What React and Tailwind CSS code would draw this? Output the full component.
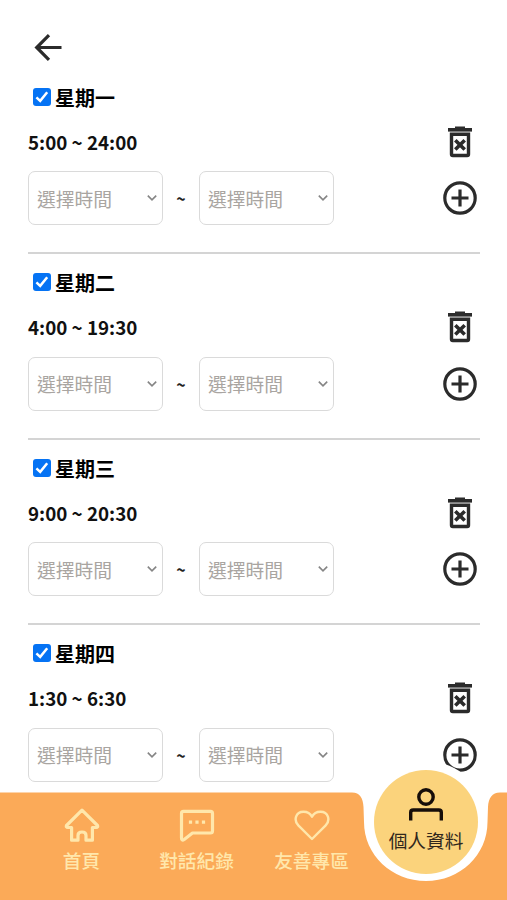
const days = [
  { name: '星期一', hours: '5:00 ~ 24:00' },
  { name: '星期二', hours: '4:00 ~ 19:30' },
  { name: '星期三', hours: '9:00 ~ 20:30' },
  { name: '星期四', hours: '1:30 ~ 6:30' },
];

function CheckBox() {
  return (
    <span role="checkbox" aria-checked="true" className="flex size-[18px] items-center justify-center rounded-[3px] bg-[#0573f4]">
      <svg viewBox="0 0 18 18" className="size-[18px]" fill="none" stroke="#fff" strokeWidth="2.5">
        <path d="M3.4 9.4 7.2 12.9 14.2 4.3" />
      </svg>
    </span>
  );
}

function TrashIcon() {
  return (
    <svg viewBox="0 0 24 32" className="h-8 w-6" fill="none" stroke="#2b2b2b">
      <path d="M0 3.800H24" strokeWidth="3.600" />
      <path d="M7 1.600H17" strokeWidth="2.200" />
      <path d="M3.500 8.300H20.500V28.200Q20.500 29.500 19.200 29.500H4.800Q3.500 29.500 3.500 28.200Z" strokeWidth="3.400" />
      <path d="M7.300 14.200 16.700 23.600M16.700 14.200 7.300 23.600" strokeWidth="3.600" />
    </svg>
  );
}

function PlusIcon() {
  return (
    <svg viewBox="0 0 34 34" className="size-[34px]" fill="none" stroke="#2b2b2b" strokeWidth="3.2">
      <circle cx="17" cy="17" r="15.2" />
      <path d="M17 8.500V25.500M8.500 17H25.500" />
    </svg>
  );
}

function TimeSelect() {
  return (
    <button className="flex h-[54px] w-[135px] items-center justify-between rounded-[7px] border-[1.5px] border-[#dadada] pr-[5px] pl-2 text-[18.8px] text-[#a9a5a1]">
      <span className="pt-[2px]">選擇時間</span>
      <svg viewBox="0 0 10 8" className="h-2 w-2.5" fill="none" stroke="#858585" strokeWidth="1.6">
        <path d="M.8 1.6 5 5.900 9.200 1.600" />
      </svg>
    </button>
  );
}

function Day({ name, hours }) {
  return (
    <section className="flex h-[185.5px] shrink-0 flex-col border-b-2 border-[#d4d4d4] pt-[14px] last:border-transparent">
      <div className="flex h-7 items-center gap-[4px] pl-[5px] text-[20px] font-bold text-black">
        <CheckBox />
        <span className="relative top-px">{name}</span>
      </div>
      <div className="mt-[15px] flex h-8 items-center justify-between pr-2">
        <span className="pt-px text-[18.8px] font-bold text-[#111]">{hours}</span>
        <TrashIcon />
      </div>
      <div className="mt-[13.5px] flex h-[54px] items-center">
        <TimeSelect />
        <span className="w-[36px] text-center text-[16px] font-bold text-[#222]">~</span>
        <TimeSelect />
        <span className="ml-auto pr-[3px]"><PlusIcon /></span>
      </div>
    </section>
  );
}

function HomeIcon() {
  return (
    <svg viewBox="0 0 36 34" className="h-[34px] w-9" fill="none" stroke="#ffe7ab" strokeWidth="3.2" strokeLinejoin="round">
      <path d="M18 2.200 2.500 17.500Q1.800 19.500 3.800 19.500H7.600V32.200H14V27.500Q14 24 18 24T22 27.500V32.200H28.400V19.500H32.200Q34.200 19.500 33.500 17.500Z" />
    </svg>
  );
}

function ChatIcon() {
  return (
    <svg viewBox="0 0 36 34" className="h-[34px] w-9" fill="none" stroke="#ffe7ab" strokeWidth="3.2" strokeLinejoin="round">
      <path d="M4.500 3.400H31.500Q33.500 3.400 33.500 5.400V23Q33.500 25 31.500 25H13.500L5.200 31.500Q2.500 33.200 2.500 30V5.400Q2.500 3.400 4.500 3.400Z" />
      <path d="M9.900 14.200h3.200M16.400 14.200h3.200M22.900 14.200h3.200" />
    </svg>
  );
}

function HeartIcon() {
  return (
    <svg viewBox="0 0 36 34" className="h-[34px] w-9" fill="none" stroke="#ffe7ab" strokeWidth="2.400" strokeLinejoin="round">
      <path d="M18 31 4.300 17.300C-.6 12.300 1.600 3.700 9.500 3.700C13.600 3.700 16.500 5.700 18 8.700C19.500 5.700 22.400 3.700 26.500 3.700C34.400 3.700 36.600 12.300 31.700 17.300Z" />
    </svg>
  );
}

function NavItem({ icon, label }) {
  return (
    <a className="flex w-[115px] flex-col items-center text-[18.7px] leading-[28px] font-medium text-[#ffe7ab]">
      {icon}
      <span className="mt-[4px]">{label}</span>
    </a>
  );
}

export default function App() {
  return (
    <div className="relative flex h-[900px] w-[507px] flex-col overflow-hidden bg-white font-['Noto_Sans_CJK_TC',sans-serif]">
      <header className="flex h-[68.5px] shrink-0 items-end pb-[7.5px] pl-[34px]">
        <svg viewBox="0 0 28 27" className="h-[27px] w-7" fill="none" stroke="#2b2b2b" strokeWidth="3.2">
          <path d="M27.500 13.500H2.500M15 1.200 2.700 13.500 15 25.800" />
        </svg>
      </header>
      <main className="flex flex-col pr-[27px] pl-[28px]">
        {days.map((day) => <Day key={day.name} {...day} />)}
      </main>
      <nav className="absolute inset-x-0 bottom-0 h-[108px]">
        <div className="absolute top-[-31px] left-[365px] size-[122px] rounded-full bg-white" />
        <svg viewBox="0 0 507 108" className="absolute inset-0 h-[108px] w-[507px]">
          <path fill="#fbaa58" d="M0 .5H352C360 .5 363 6 363.500 15L364 30C364 63 392 89 426 89S487.500 63 487.500 30L488 15C488.500 6 492 .5 500 .5H507V108H0Z" />
        </svg>
        <div className="relative flex pt-[16px] pl-[24px]">
          <NavItem icon={<HomeIcon />} label="首頁" />
          <NavItem icon={<ChatIcon />} label="對話紀錄" />
          <NavItem icon={<HeartIcon />} label="友善專區" />
        </div>
        <a className="absolute top-[-22px] left-[374px] flex size-[104px] flex-col items-center rounded-full bg-[#fbd37c] pt-[18px] text-[18.7px] leading-[28px] text-[#30271c]">
          <svg viewBox="0 0 34 33" className="h-[33px] w-[34px]" fill="none" stroke="#160d09" strokeWidth="3.400">
            <circle cx="17" cy="9" r="7.200" />
            <path d="M1.700 32.500V24.500Q1.700 22 4.200 22H29.800Q32.300 22 32.300 24.500V32.500" />
          </svg>
          <span className="mt-[5px] whitespace-nowrap">個人資料</span>
        </a>
      </nav>
    </div>
  );
}
